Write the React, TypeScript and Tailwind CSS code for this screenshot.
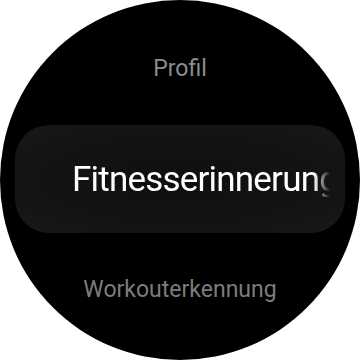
import React from "react";

export default function App() {
  return (
    <div className="w-[360px] h-[360px] bg-white" style={{ fontFamily: "Roboto, 'Noto Sans', sans-serif" }}>
      <div className="w-[360px] h-[360px] rounded-full bg-black flex flex-col overflow-hidden">
        <div className="h-[50px] shrink-0" />
        <div className="h-[36px] flex items-center justify-center text-[23px] text-[#8c8c8c] leading-none">
          Profil
        </div>
        <div className="h-[39px] shrink-0" />
        <div className="mx-[15px] h-[108px] rounded-[34px] bg-[radial-gradient(ellipse_at_center,#0f0f0f_0%,#131313_60%,#181818_100%)] flex items-center pl-[57px]">
          <div className="w-[258px] overflow-hidden whitespace-nowrap text-[35px] tracking-[-0.8px] text-white leading-none [mask-image:linear-gradient(to_right,black_calc(100%-16px),transparent)]">
            Fitnesserinnerung
          </div>
        </div>
        <div className="h-[38px] shrink-0" />
        <div className="h-[36px] flex items-center justify-center text-[23px] text-[#7c7c7c] leading-none">
          Workouterkennung
        </div>
      </div>
    </div>
  );
}
